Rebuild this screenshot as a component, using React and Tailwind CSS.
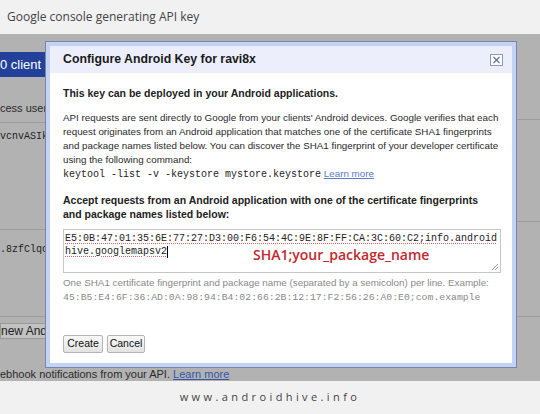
const sans = { fontFamily: '"Liberation Sans", Arial, sans-serif' };

const CloseIcon = () => (
  <svg width="13" height="12" viewBox="0 0 13 12">
    <rect x="0.5" y="0.5" width="12" height="11" fill="#fbfcff" stroke="#8a9aba" />
    <path d="M3.5 3 L9.5 9 M9.5 3 L3.5 9" stroke="#5f6f90" strokeWidth="1.1" />
  </svg>
);

const Grip = () => (
  <svg width="8" height="8" viewBox="0 0 8 8" className="absolute right-[1px] bottom-[1px]">
    <path d="M1 7 L7 1 M4 7 L7 4" stroke="#8a8a8a" strokeWidth="0.9" />
  </svg>
);

export default function App() {
  return (
    <div className="w-[540px] h-[414px] overflow-hidden flex flex-col bg-[#f1f1f1]">
      {/* Top caption */}
      <div className="h-[34px] shrink-0 flex items-center px-[7px] text-[12px] text-[#444] font-['Open_Sans',sans-serif]">
        Google console generating API key
      </div>

      {/* Console behind overlay */}
      <div className="relative flex-1 flex bg-[#b2b2b2]" style={sans}>
        <div className="w-[45px] shrink-0 flex flex-col whitespace-nowrap text-[11px] text-[#2b2b2b]">
          <div className="h-[18px]" />
          <div className="h-[25px] w-[80px] bg-[#23419a] text-white text-[13px] flex items-center">0 client ID</div>
          <div className="h-[46px] pt-[24px] leading-[14px] border-b border-[#9c9c9c]">cess user data</div>
          <div className="h-[107px] pt-[7px] leading-[14px] border-b border-[#9c9c9c] font-['Liberation_Mono',monospace] text-[10px] text-[#1f1f1f]">vcnvASIk</div>
          <div className="h-[87px] pt-[13px] leading-[14px] border-b border-[#9c9c9c] font-['Liberation_Mono',monospace] text-[10px] text-[#1f1f1f]">.8zfClqc</div>
          <div className="h-[6px]" />
          <div className="h-[16px] w-[80px] bg-[#c2c2c2] border border-[#9a9a9a] text-[12px] leading-[14px] text-[#222]">new Android key</div>
          <div className="mt-[28px] leading-[14px]">
            ebhook notifications from your API. <span className="text-[#3556a8] underline">Learn more</span>
          </div>
        </div>
        <div className="flex-1" />
        <div className="w-[23px] shrink-0 flex flex-col">
          <div className="h-[86px] border-b border-[#9c9c9c]" />
          <div className="h-[102px] border-b border-[#9c9c9c]" />
          <div className="h-[95px] border-b border-[#9c9c9c]" />
        </div>

        {/* Dialog */}
        <div className="absolute left-[45px] top-[7px] w-[472px] h-[327px] border border-[#7886ad] bg-[#c3d2f5] p-[4px]">
          <div className="h-full bg-white flex flex-col text-[#222]">
            <div className="h-[27px] shrink-0 bg-[#eceffb] pl-[13px] pr-[9px] flex items-center justify-between">
              <span className="text-[12.3px] font-bold text-[#1a1a1a]">Configure Android Key for ravi8x</span>
              <CloseIcon />
            </div>
            <div className="pl-[13px] pr-[11px] pt-[13px] flex flex-col">
              <div className="text-[10.5px] font-bold leading-[14px]">This key can be deployed in your Android applications.</div>
              <div className="mt-[11px] text-[9.8px] leading-[14px] text-[#2a2a2a]">
                <div>API requests are sent directly to Google from your clients' Android devices. Google verifies that each</div>
                <div>request originates from an Android application that matches one of the certificate SHA1 fingerprints</div>
                <div>and package names listed below. You can discover the SHA1 fingerprint of your developer certificate</div>
                <div>using the following command:</div>
                <div>
                  <span className="font-['Liberation_Mono',monospace] text-[10px] text-[#222]">keytool -list -v -keystore mystore.keystore</span>{" "}
                  <span className="text-[#5a7dc8] underline">Learn more</span>
                </div>
              </div>
              <div className="mt-[11px] text-[10.5px] font-bold leading-[14px]">
                <div>Accept requests from an Android application with one of the certificate fingerprints</div>
                <div>and package names listed below:</div>
              </div>
              <div className="relative mt-[8px] h-[44px] border border-[#c6c6c6] pl-[1px] pt-[2px] font-['Liberation_Mono',monospace] text-[10px] leading-[13px] text-[#222]">
                <div>
                  <span className="underline decoration-dotted decoration-[#d66] underline-offset-2">E5:0B:47:01:35:6E:77:27:D3:00:F6:54:4C:9E:8F:FF:CA:3C:60:C2;info.android</span>
                </div>
                <div className="flex items-center">
                  <span className="underline decoration-dotted decoration-[#d66] underline-offset-2">hive.googlemapsv2</span>
                  <span className="inline-block w-px h-[12px] bg-black" />
                </div>
                <div className="absolute left-[189px] top-[16px] text-[14px] leading-[18px] font-semibold text-[#c4272e] font-['Open_Sans',sans-serif]">
                  SHA1;your_package_name
                </div>
                <Grip />
              </div>
              <div className="mt-[2px] leading-[15px] text-[#8a8a8a]">
                <div className="text-[9.8px]">One SHA1 certificate fingerprint and package name (separated by a semicolon) per line. Example:</div>
                <div className="font-['Liberation_Mono',monospace] text-[9.8px]">45:B5:E4:6F:36:AD:0A:98:94:B4:02:66:2B:12:17:F2:56:26:A0:E0;com.example</div>
              </div>
              <div className="mt-[30px] flex gap-[4px]">
                <button className="h-[18px] w-[40px] border border-[#b4b4b4] rounded-[2px] bg-gradient-to-b from-[#fafafa] to-[#e2e2e2] text-[10.5px] text-[#111]">Create</button>
                <button className="h-[18px] w-[38px] border border-[#b4b4b4] rounded-[2px] bg-gradient-to-b from-[#fafafa] to-[#e2e2e2] text-[10.5px] text-[#111]">Cancel</button>
              </div>
            </div>
          </div>
        </div>
      </div>

      {/* Footer */}
      <div className="h-[33px] shrink-0 flex items-center justify-center text-[11px] tracking-[3.4px] text-[#444] font-['Open_Sans',sans-serif]">
        www.androidhive.info
      </div>
    </div>
  );
}
